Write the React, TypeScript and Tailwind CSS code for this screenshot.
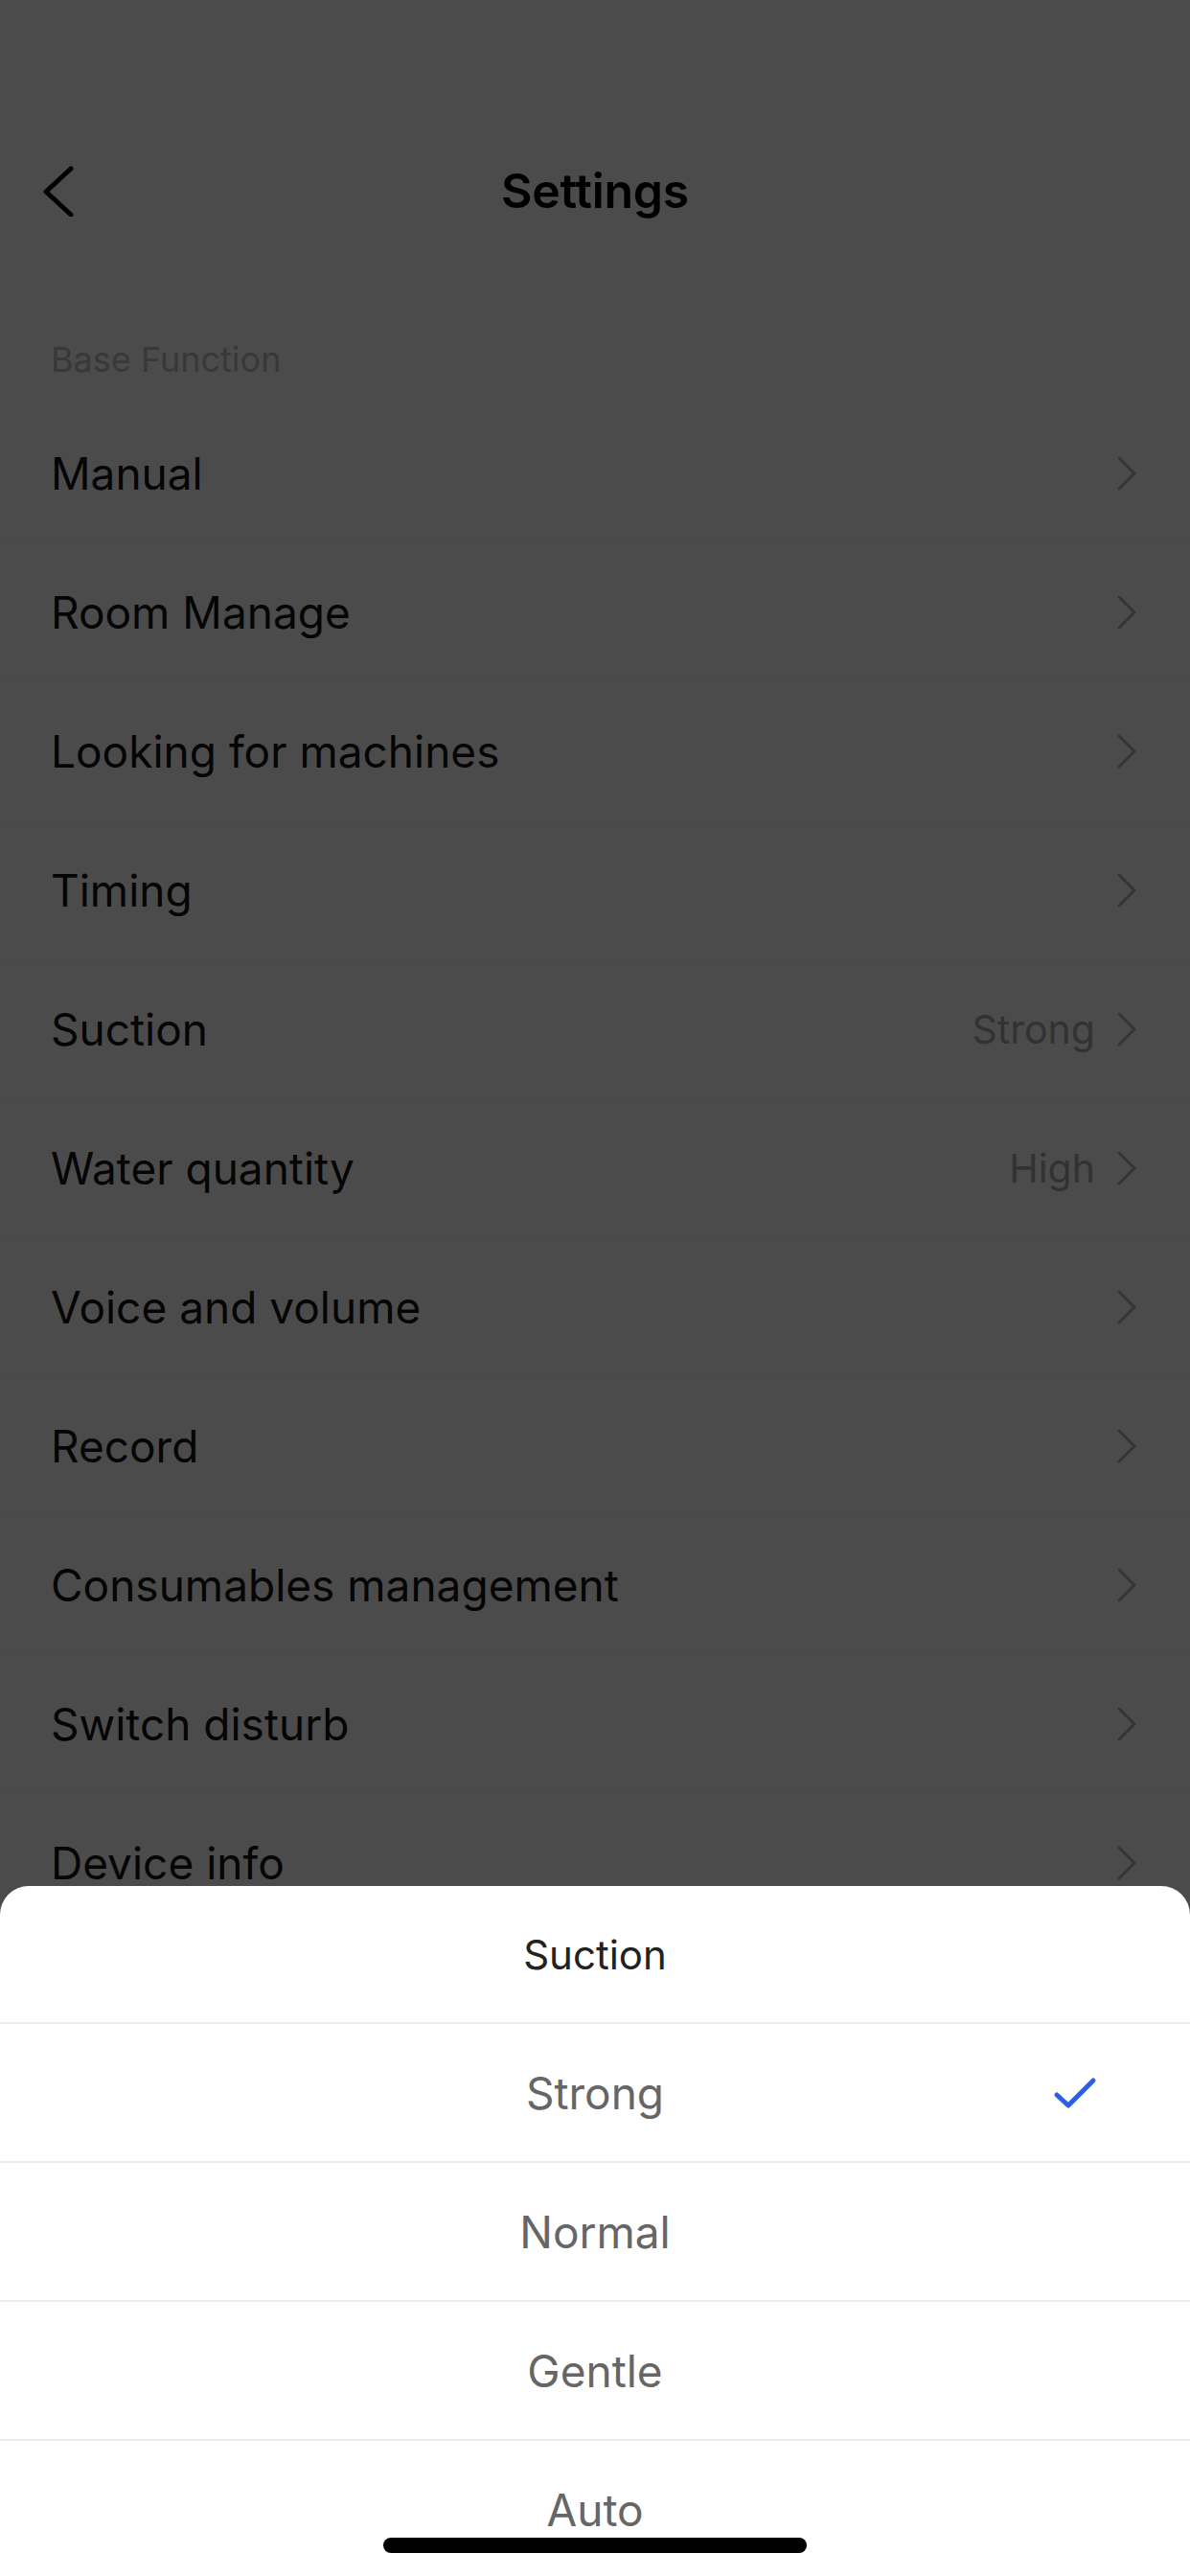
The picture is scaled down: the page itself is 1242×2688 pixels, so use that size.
import React from "react";

const rows: { label: string; value?: string }[] = [
  { label: "Manual" },
  { label: "Room Manage" },
  { label: "Looking for machines" },
  { label: "Timing" },
  { label: "Suction", value: "Strong" },
  { label: "Water quantity", value: "High" },
  { label: "Voice and volume" },
  { label: "Record" },
  { label: "Consumables management" },
  { label: "Switch disturb" },
  { label: "Device info" },
  { label: "Reset" },
];

const options = ["Strong", "Normal", "Gentle", "Auto"];

function Chevron() {
  return (
    <svg width="22" height="36" viewBox="0 0 22 36" fill="none">
      <path d="M3 2 L19 18 L3 34" stroke="#b4b4b4" strokeWidth="3" strokeLinecap="round" strokeLinejoin="round" />
    </svg>
  );
}

export default function App() {
  return (
    <div className="relative h-[2688px] w-[1242px] overflow-hidden bg-white font-['Inter','Noto_Sans',sans-serif]">
      {/* status bar space */}
      <div className="h-[132px]" />

      {/* nav bar */}
      <div className="grid h-[134px] grid-cols-[1fr_auto_1fr] items-center px-[44px]">
        <svg width="34" height="54" viewBox="0 0 34 54" fill="none">
          <path d="M30 4 L4 28 L30 52" stroke="#000" strokeWidth="5" strokeLinecap="round" strokeLinejoin="round" />
        </svg>
        <h1 className="text-[50px] font-semibold leading-none tracking-[-0.3px] text-black">Settings</h1>
        <div />
      </div>

      <div className="pt-[87px] pb-[25px] pl-[53px] text-[36px] leading-[44px] text-[#bdbdbd]">Base Function</div>

      <div>
        {rows.map((r) => (
          <div key={r.label} className="flex h-[145px] items-center justify-between border-b border-[#f4f4f4] pl-[53px] pr-[55px]">
            <span className="text-[46px] leading-none text-[#111]">{r.label}</span>
            <div className="flex items-center gap-[22px]">
              {r.value && <span className="text-[41px] leading-none text-[#aaaaaa]">{r.value}</span>}
              <Chevron />
            </div>
          </div>
        ))}
      </div>

      {/* dim overlay */}
      <div className="absolute inset-0 bg-black/[0.705]" />

      {/* bottom sheet */}
      <div className="absolute inset-x-0 bottom-0 flex h-[720px] flex-col rounded-t-[30px] bg-white">
        <div className="flex h-[142px] shrink-0 items-center justify-center text-[42px] text-[#222]">Suction</div>
        {options.map((o, i) => (
          <div key={o} className="grid h-[145px] shrink-0 grid-cols-[1fr_auto_1fr] items-center border-t-2 border-[#ececec]">
            <div />
            <span className="text-[46px] leading-none text-[#666]">{o}</span>
            <div className="flex justify-end pr-[97px]">
              {i === 0 && (
                <svg width="46" height="34" viewBox="0 0 46 34" fill="none">
                  <path d="M4 19 L16 30 L42 4" stroke="#2d5ee3" strokeWidth="5" strokeLinecap="round" strokeLinejoin="round" />
                </svg>
              )}
            </div>
          </div>
        ))}
        <div className="absolute bottom-[24px] left-1/2 h-[16px] w-[442px] -translate-x-1/2 rounded-full bg-black" />
      </div>
    </div>
  );
}
